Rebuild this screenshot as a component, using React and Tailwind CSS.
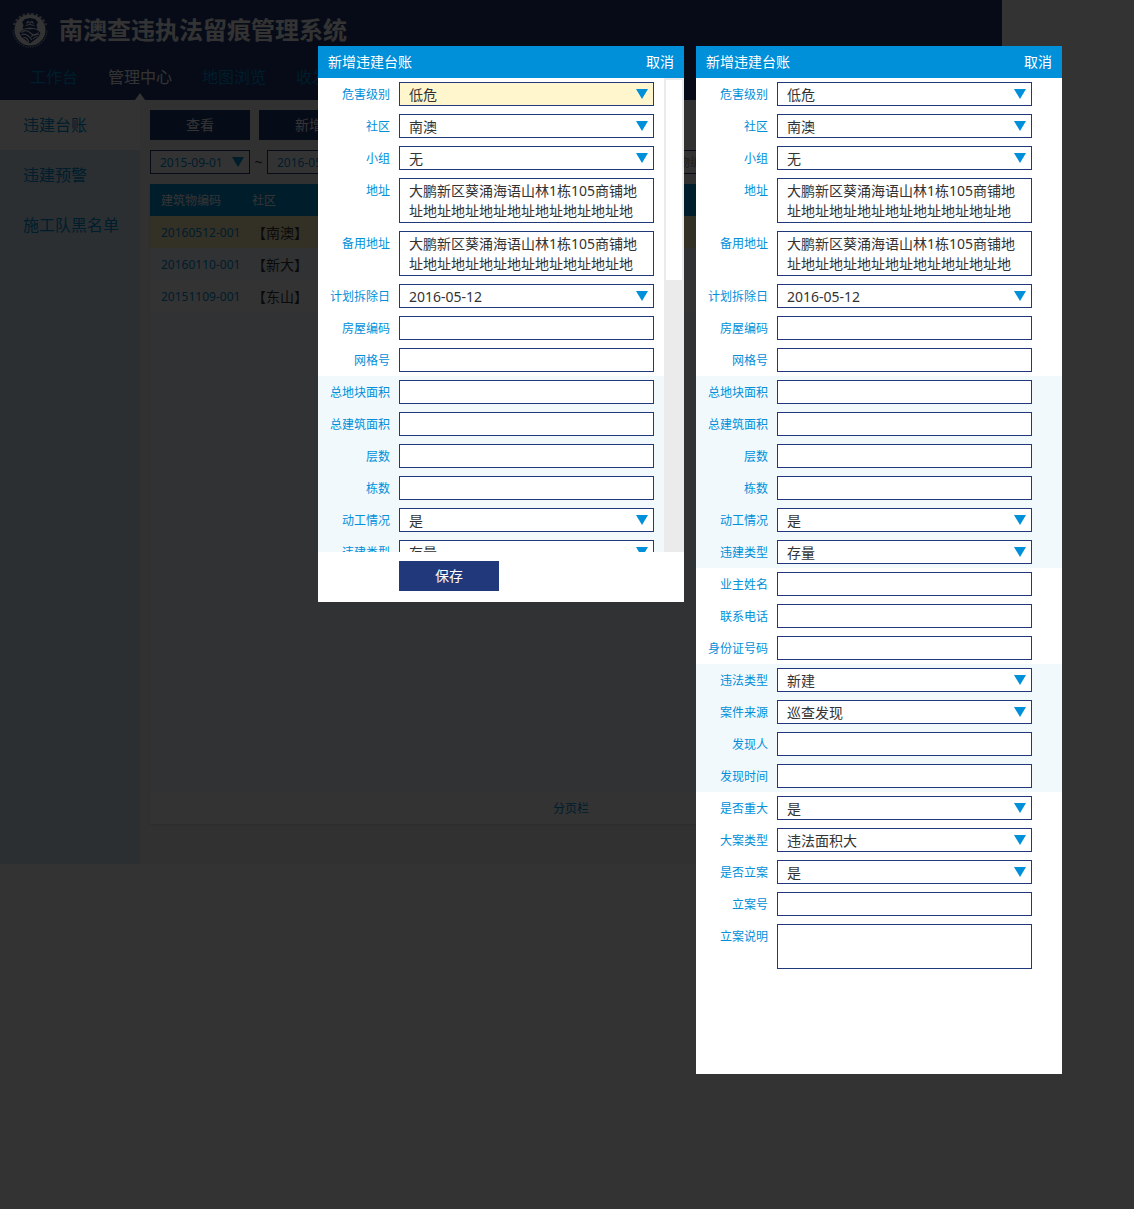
import React from "react";

const ADDRESS = "大鹏新区葵涌海语山林1栋105商铺地址地址地址地址地址地址地址地址地";

const SECTIONS = [
  {
    tinted: false,
    fields: [
      { id: "danger", label: "危害级别", type: "select", value: "低危" },
      { id: "community", label: "社区", type: "select", value: "南澳" },
      { id: "group", label: "小组", type: "select", value: "无" },
      { id: "address", label: "地址", type: "area", value: ADDRESS },
      { id: "address2", label: "备用地址", type: "area", value: ADDRESS },
      { id: "plan", label: "计划拆除日", type: "select", value: "2016-05-12" },
      { id: "house", label: "房屋编码", type: "text" },
      { id: "grid", label: "网格号", type: "text" },
    ],
  },
  {
    tinted: true,
    fields: [
      { id: "land", label: "总地块面积", type: "text" },
      { id: "build", label: "总建筑面积", type: "text" },
      { id: "floors", label: "层数", type: "text" },
      { id: "blocks", label: "栋数", type: "text" },
      { id: "started", label: "动工情况", type: "select", value: "是" },
      { id: "kind", label: "违建类型", type: "select", value: "存量" },
    ],
  },
  {
    tinted: false,
    fields: [
      { id: "owner", label: "业主姓名", type: "text" },
      { id: "phone", label: "联系电话", type: "text" },
      { id: "idno", label: "身份证号码", type: "text" },
    ],
  },
  {
    tinted: true,
    fields: [
      { id: "illegal", label: "违法类型", type: "select", value: "新建" },
      { id: "source", label: "案件来源", type: "select", value: "巡查发现" },
      { id: "finder", label: "发现人", type: "text" },
      { id: "found", label: "发现时间", type: "text" },
    ],
  },
  {
    tinted: false,
    fields: [
      { id: "major", label: "是否重大", type: "select", value: "是" },
      { id: "majorkind", label: "大案类型", type: "select", value: "违法面积大" },
      { id: "filed", label: "是否立案", type: "select", value: "是" },
      { id: "caseno", label: "立案号", type: "text" },
      { id: "casenote", label: "立案说明", type: "area", value: "" },
    ],
  },
];

function Arrow({ className }) {
  return (
    <svg viewBox="0 0 12 10" className={`pointer-events-none absolute h-[10px] w-3 fill-[#008fd9] ${className}`} aria-hidden="true">
      <path d="M0 0H12L6 10Z" />
    </svg>
  );
}

function Field({ field, prefix, highlighted }) {
  const id = `${prefix}-${field.id}`;
  return (
    <div className="flex items-start gap-[9px] py-1">
      <label htmlFor={id} className="h-6 w-[72px] shrink-0 whitespace-nowrap text-right text-xs leading-[26px] text-[#008fd9]">
        {field.label}
      </label>
      {field.type === "select" && (
        <div className="relative min-w-0 flex-1">
          <select
            id={id}
            className={`block h-6 w-full appearance-none rounded-none border border-[#21397a] pl-[9px] pr-6 pt-px text-sm leading-5 text-[#333] outline-none ${highlighted ? "bg-[#fff6cd]" : "bg-white"}`}
          >
            <option>{field.value}</option>
          </select>
          <Arrow className="right-[6px] top-[7px]" />
        </div>
      )}
      {field.type === "text" && (
        <input id={id} type="text" className="block h-6 min-w-0 flex-1 border border-[#21397a] bg-white px-[9px] text-sm text-[#333] outline-none" />
      )}
      {field.type === "area" && (
        <textarea
          id={id}
          defaultValue={field.value}
          className="block h-[45px] min-w-0 flex-1 resize-none overflow-hidden border border-[#21397a] bg-white px-[9px] py-[2px] text-sm leading-5 text-[#333] outline-none"
        />
      )}
    </div>
  );
}

function Fields({ sections, prefix, highlight, padding }) {
  return sections.map((section, i) => (
    <div key={i} className={`${padding} ${section.tinted ? "bg-[#f2f9fd]" : "bg-white"}`}>
      {section.fields.map((field) => (
        <Field key={field.id} field={field} prefix={prefix} highlighted={field.id === highlight} />
      ))}
    </div>
  ));
}

function Dialog({ children }) {
  return (
    <section role="dialog" aria-label="新增违建台账" className="w-[366px] shrink-0 bg-white">
      <header className="flex h-8 items-center justify-between bg-[#008fd9] px-[10px] text-sm text-white">
        <h2>新增违建台账</h2>
        <button type="button">取消</button>
      </header>
      {children}
    </section>
  );
}

function Logo() {
  return (
    <svg viewBox="0 0 38 38" className="size-[38px]" aria-hidden="true">
      <path d="M3 14A17 17 0 0 1 35 14" fill="none" stroke="#fff" strokeWidth="2.2" strokeDasharray="2.4 2" opacity="0.75" />
      <path d="M2 19A17 17 0 0 0 36 19" fill="none" stroke="#fff" strokeWidth="1.4" strokeDasharray="1.4 1" opacity="0.55" />
      <circle cx="19" cy="19" r="15.5" fill="#fff" />
      <path d="M14 8L19 7L24 8L27 11L25.5 14L26.5 18Q19 15 11.5 18L12.5 14L11 11Z" fill="#21397a" />
      <path d="M15 12h1.6v-1.6h1.4V12h2v-1.6h1.4V12H23M14.5 14.5Q19 12.5 23.5 14.5" fill="none" stroke="#fff" strokeWidth="1" />
      <path d="M8.5 22Q13 16.5 19 18.5Q25 16.5 29.5 22L27.5 26L19 32.5L10.5 26Z" fill="#21397a" />
      <path d="M10.5 21.5Q15 17.5 19.5 22T27.5 21.5" fill="none" stroke="#fff" strokeWidth="1.2" />
      <path d="M10.5 24Q15 21 21 29M12.5 27Q15 25 18 31M28 23.5Q23 22 20 26M27 26Q24 25 22 28" fill="none" stroke="#fff" strokeWidth="1.1" />
    </svg>
  );
}

function DateSelect({ value, label }) {
  return (
    <div className="relative w-[100px]">
      <select aria-label={label} className="block h-6 w-full appearance-none rounded-none border border-[#21397a] bg-white pl-[9px] pt-px text-xs text-[#008fd9]">
        <option>{value}</option>
      </select>
      <Arrow className="right-[6px] top-[7px]" />
    </div>
  );
}

const NAV = ["工作台", "管理中心", "地图浏览", "收发"];
const SIDE = ["违建台账", "违建预警", "施工队黑名单"];
const ROWS = [
  ["20160512-001", "【南澳】", "bg-[#fff0bf]"],
  ["20160110-001", "【新大】", "bg-[#f5f9fd]"],
  ["20151109-001", "【东山】", "bg-white"],
];

function Backdrop() {
  return (
    <div className="mr-[132px] bg-[#f5f5f5]">
      <header className="h-[100px] bg-[#1e3873]">
        <div className="flex h-[60px] items-center gap-[10px] pl-[11px]">
          <Logo />
          <h1 className="text-2xl font-bold text-white">南澳查违执法留痕管理系统</h1>
        </div>
        <nav className="flex h-10 gap-[30px] pl-[30px] leading-[34px]">
          {NAV.map((item) => (
            <a key={item} href="#" className={item === "管理中心" ? "text-white" : "text-[#008fd9]"}>
              {item}
            </a>
          ))}
        </nav>
      </header>
      <div className="flex min-h-[764px]">
        <aside className="relative w-[140px] shrink-0 bg-[#d5ebf7]">
          <svg viewBox="0 0 10 7" className="absolute -right-[5px] -top-[7px] h-[7px] w-[10px] fill-white" aria-hidden="true">
            <path d="M5 0L10 7H0Z" />
          </svg>
          {SIDE.map((item, i) => (
            <a key={item} href="#" className={`block h-[50px] pl-[23px] leading-[50px] text-[#008fd9] ${i === 0 ? "bg-white" : ""}`}>
              {item}
            </a>
          ))}
        </aside>
        <main className="flex flex-1 flex-col px-[10px] pb-10 pt-[10px]">
          <div className="flex gap-[9px] text-sm text-white">
            <button type="button" className="h-[30px] w-[100px] bg-[#21397a]">查看</button>
            <button type="button" className="h-[30px] w-[100px] bg-[#21397a]">新增</button>
          </div>
          <div className="mt-[10px] flex items-center justify-between pr-[248px] text-xs">
            <div className="flex items-center">
              <DateSelect label="开始日期" value="2015-09-01" />
              <span className="w-[17px] text-center text-sm text-[#333]">~</span>
              <DateSelect label="结束日期" value="2016-05-12" />
            </div>
            <input aria-label="建筑物编码" placeholder="建筑物编码" className="h-6 w-[100px] border border-[#21397a] bg-white px-[9px] placeholder:text-[#999]" />
          </div>
          <div className="mt-[10px] flex flex-1 flex-col bg-[#f5f9fd] shadow">
            <table className="w-full table-fixed text-left">
              <thead>
                <tr className="h-8 bg-[#008fd9] text-xs text-white">
                  <th className="w-[102px] pl-[11px] pt-[2px] font-normal">建筑物编码</th>
                  <th className="pt-[2px] font-normal">社区</th>
                </tr>
              </thead>
              <tbody>
                {ROWS.map(([code, area, tone]) => (
                  <tr key={code} className={`h-8 ${tone}`}>
                    <td className="whitespace-nowrap pl-[11px] pt-[2px] text-xs text-[#008fd9]">{code}</td>
                    <td className="pt-[2px] text-sm leading-5 text-[#333]">{area}</td>
                  </tr>
                ))}
              </tbody>
            </table>
            <footer className="mt-auto h-8 bg-white text-center text-xs leading-[34px] text-[#008fd9]">分页栏</footer>
          </div>
        </main>
      </div>
    </div>
  );
}

export default function App() {
  return (
    <div className="relative min-h-screen bg-white font-['Noto_Sans','Noto_Sans_CJK_SC',sans-serif]">
      <Backdrop />
      <div className="absolute inset-0 flex items-start justify-end gap-3 bg-black/80 pr-[72px] pt-[46px]">
        <Dialog>
          <div className="flex h-[474px] overflow-hidden">
            <div className="min-w-0 flex-1">
              <Fields sections={SECTIONS.slice(0, 2)} prefix="short" highlight="danger" padding="pr-[10px]" />
            </div>
            <div className="w-5 shrink-0 bg-[#ebebeb] p-[2px]">
              <div className="h-[200px] bg-white" />
            </div>
          </div>
          <footer className="pb-[11px] pl-[81px] pt-[9px]">
            <button type="button" className="block h-[30px] w-[100px] bg-[#21397a] text-sm text-white">保存</button>
          </footer>
        </Dialog>
        <Dialog>
          <div className="pb-[101px]">
            <Fields sections={SECTIONS} prefix="full" padding="pr-[30px]" />
          </div>
        </Dialog>
      </div>
    </div>
  );
}
